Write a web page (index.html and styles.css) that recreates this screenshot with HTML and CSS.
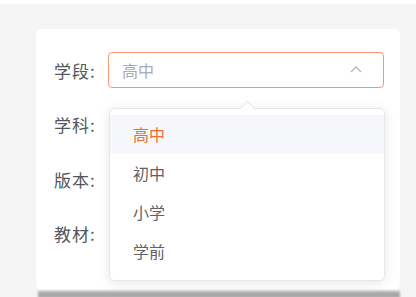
FILE: index.html
```html
<!DOCTYPE html>
<html lang="zh-CN">
<head>
    <meta charset="UTF-8">
    <meta name="viewport" content="width=device-width, initial-scale=1.0">
    <title>选择教材</title>
    <link rel="stylesheet" href="styles.css">
</head>
<body>

    <div class="top-strip"></div>

    <div class="card">
        <div class="form-row">
            <span class="form-label">学段:</span>
            <div class="select is-open">
                <span class="select-value">高中</span>
                <svg class="select-arrow" width="14" height="14" viewBox="0 0 14 14">
                    <path d="M2 10 L7 5 L12 10" fill="none" stroke="#b4b7bd" stroke-width="1.3"/>
                </svg>
            </div>

            <div class="dropdown">
                <span class="dropdown-arrow"></span>
                <div class="dropdown-item selected hover">高中</div>
                <div class="dropdown-item">初中</div>
                <div class="dropdown-item">小学</div>
                <div class="dropdown-item">学前</div>
            </div>
        </div>
        <div class="form-row">
            <span class="form-label">学科:</span>
            <div class="select"></div>
        </div>
        <div class="form-row">
            <span class="form-label">版本:</span>
            <div class="select"></div>
        </div>
        <div class="form-row">
            <span class="form-label">教材:</span>
            <div class="select"></div>
        </div>
    </div>

    <div class="card-shadow"></div>

</body>
</html>
```

FILE: styles.css
```css
body {
    margin: 0;
    padding: 0;
    background-color: #f5f5f5;
    font-family: "Noto Sans CJK SC", "Noto Sans", sans-serif;
    color: #606266;
    overflow: hidden;
}

.top-strip {
    height: 4px;
    background-color: #ffffff;
}

.card {
    position: relative;
    margin: 25px 16px 0 36px;
    height: 260px;
    box-sizing: border-box;
    padding: 23px 16px 0 18px;
    background-color: #ffffff;
    border-radius: 5px;
}

.form-row {
    display: flex;
    align-items: center;
    height: 36px;
    margin-bottom: 18.5px;
}

.form-label {
    width: 54px;
    font-size: 17px;
    letter-spacing: 1px;
    color: #55585e;
}

.select {
    flex: 1;
    height: 36px;
    box-sizing: border-box;
    display: flex;
    align-items: center;
    justify-content: space-between;
    padding: 0 20px 0 13px;
    border-radius: 4px;
}

.select.is-open {
    border: 1.5px solid #f4976e;
}

.select-value {
    font-size: 16px;
    color: #a8abb2;
}

.select-arrow {
    margin-top: -2px;
}

.dropdown {
    position: absolute;
    top: 79px;
    left: 73px;
    width: 276px;
    box-sizing: border-box;
    padding: 6px 0 9px;
    background-color: #ffffff;
    border: 1px solid #e4e7ed;
    border-radius: 5px;
    box-shadow: 0 2px 12px rgba(0, 0, 0, 0.1);
    z-index: 2;
}

.dropdown-arrow {
    position: absolute;
    top: -6px;
    left: 132px;
    width: 10px;
    height: 10px;
    background-color: #ffffff;
    border-top: 1px solid #e4e7ed;
    border-left: 1px solid #e4e7ed;
    transform: rotate(45deg);
}

.dropdown-item {
    position: relative;
    height: 39px;
    line-height: 39px;
    padding-left: 23px;
    font-size: 16px;
    color: #606266;
}

.dropdown-item.hover {
    background-color: #f5f7fa;
}

.dropdown-item.selected {
    color: #f26b35;
}

.card-shadow {
    height: 7px;
    margin: 2px 16px 0 38px;
    background: linear-gradient(to bottom, #b0b0b0, #a2a2a2);
    filter: blur(1px);
}
```
